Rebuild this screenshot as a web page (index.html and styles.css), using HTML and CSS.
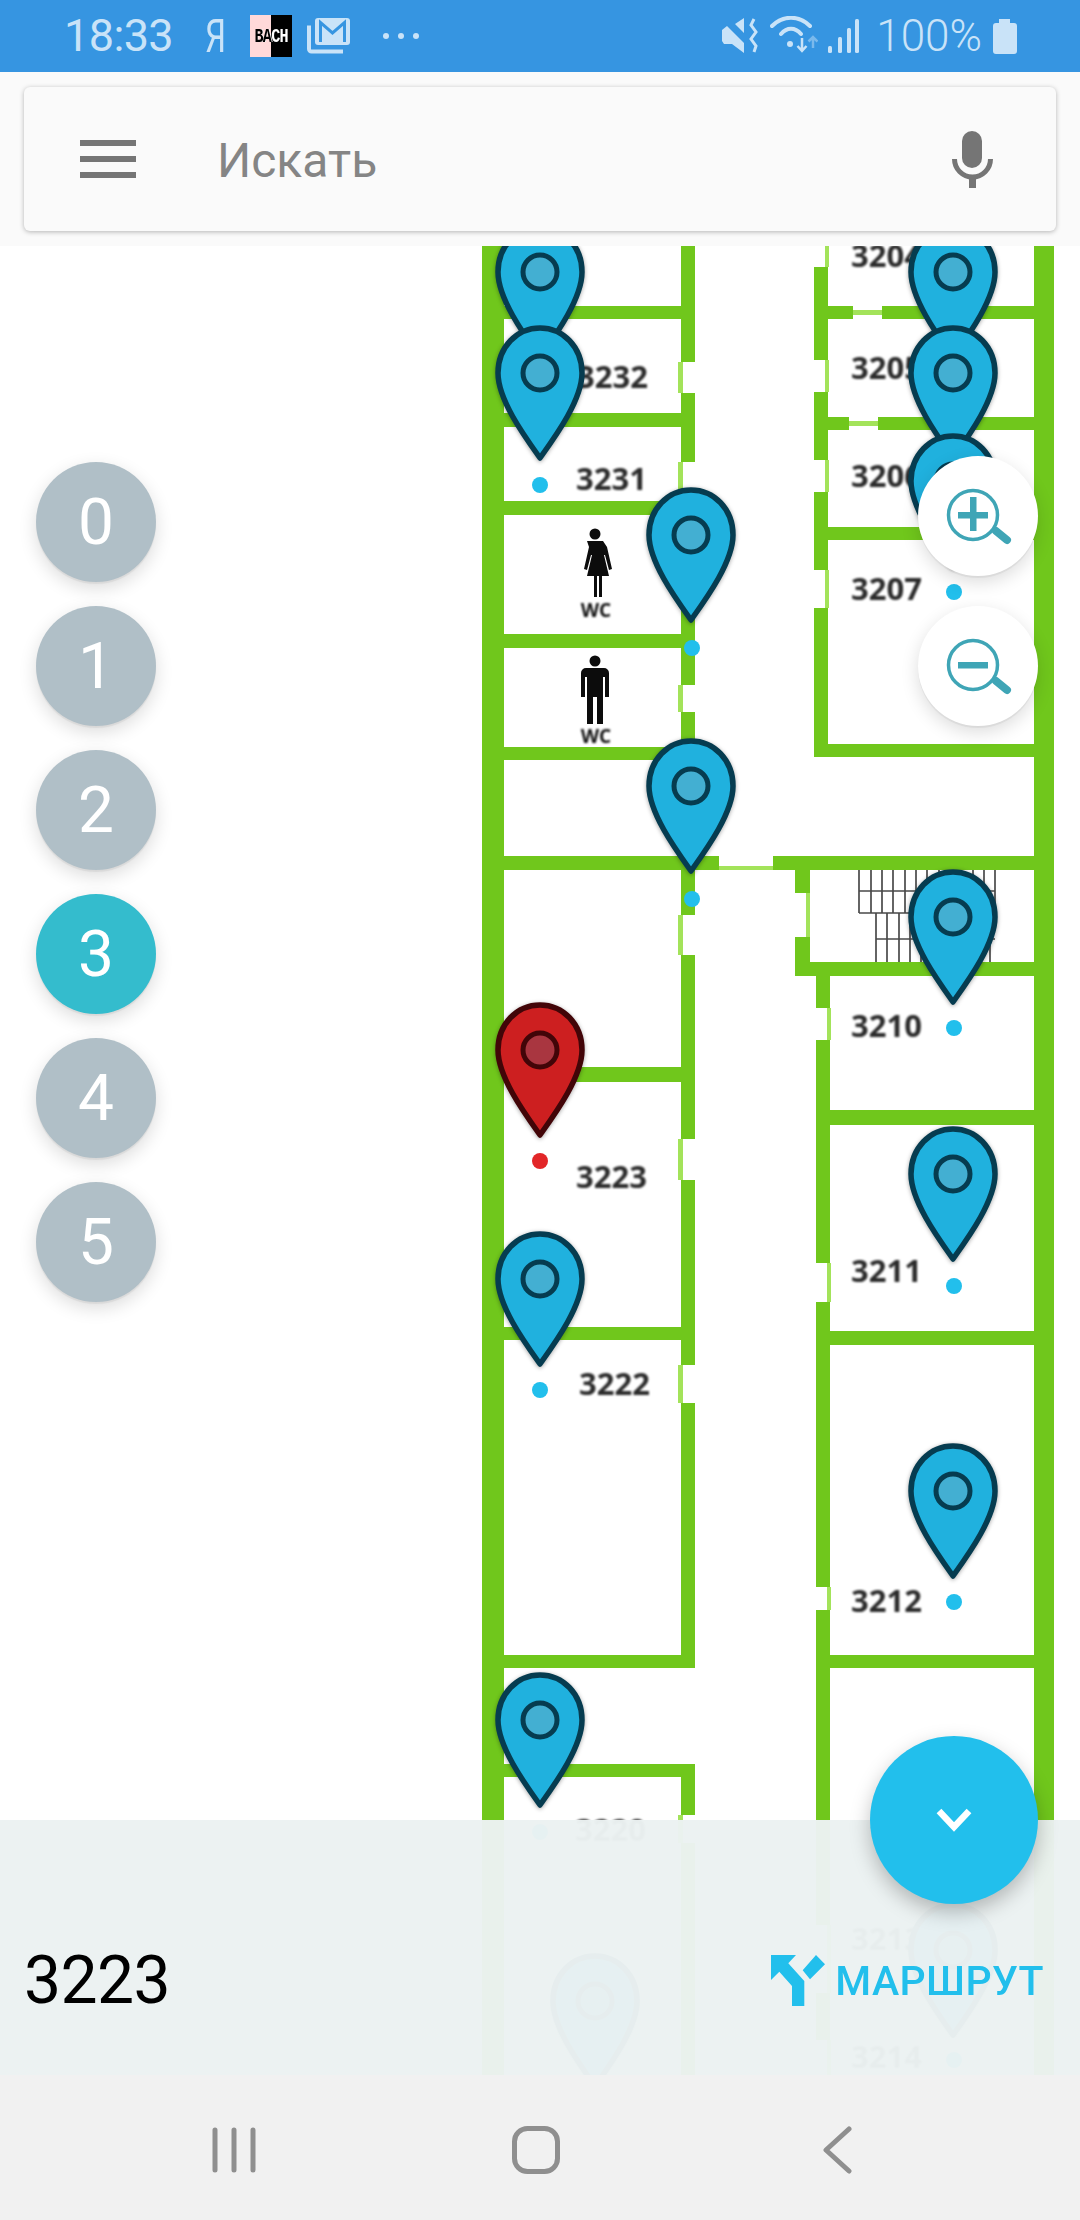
FILE: index.html
```html
<!DOCTYPE html>
<html lang="ru">
<head>
<meta charset="utf-8">
<title>Карта</title>
<link rel="stylesheet" href="styles.css">
</head>
<body>
<div class="phone">
  <header class="status">
    <div class="status-group">
      <span class="time">18:33</span>
      <span class="ya">Я</span>
      <span class="bach"><span class="bach-text"><span class="bk">BA</span><span class="wt">CH</span></span></span>
      <svg class="ic-mail" width="44" height="36" viewBox="0 0 44 36">
        <rect class="st-fill" x="8" y="0" width="35" height="27" rx="3"/>
        <path class="st-cut" d="M13.5 24V4.5L25.5 15 37.500 4.500V24"/>
        <path class="st-line" d="M2 7.500V31a2.500 2.500 0 0 0 2.500 2.500H36"/>
      </svg>
      <svg class="ic-dots" width="37" height="8" viewBox="0 0 37 8">
        <circle class="st-fill" cx="3" cy="4" r="3"/><circle class="st-fill" cx="18" cy="4" r="3"/><circle class="st-fill" cx="33" cy="4" r="3"/>
      </svg>
    </div>
    <div class="status-group">
      <svg class="ic-mute" width="36" height="36" viewBox="0 0 36 36">
        <path class="st-fill" d="M0 12l5-4 17 17v10L10 26H2l-2-3zM13 6l9-6v15z"/>
        <path class="st-wave" d="M32 1l-3 6 5 7-5 7 5 7-2 6"/>
      </svg>
      <svg class="ic-wifi" width="48" height="42" viewBox="0 0 48 42">
        <path class="st-arc" d="M2 10C13-1 29-1 40 10M11 18c6-7 14-7 20 0"/>
        <circle class="st-fill" cx="20" cy="28" r="3"/>
        <path class="st-arrow" d="M32 22v13M27.500 30l4.500 5 4.500-5"/>
        <path class="st-arrow dim" d="M43 32V21M38.500 25.500l4.500-4.500 4.500 4.500"/>
      </svg>
      <svg class="ic-signal" width="31" height="34" viewBox="0 0 31 34">
        <rect class="st-fill" x="0" y="27" width="4" height="7" rx="1.500"/>
        <rect class="st-fill" x="10" y="18" width="4" height="16" rx="1.500"/>
        <rect class="st-fill" x="19" y="9" width="4" height="25" rx="1.500"/>
        <rect class="st-fill" x="27" y="0" width="4" height="34" rx="1.500"/>
      </svg>
      <span class="pct">100%</span>
      <svg class="ic-batt" width="24" height="35" viewBox="0 0 24 35">
        <path class="st-fill" d="M6 0h11v4h4a3 3 0 0 1 3 3v25a3 3 0 0 1-3 3H3a3 3 0 0 1-3-3V7a3 3 0 0 1 3-3h3z"/>
      </svg>
    </div>
  </header>

  <div class="top">
    <div class="search">
      <div class="burger"><i></i><i></i><i></i></div>
      <span class="search-text">Искать</span>
      <svg class="mic" width="41" height="57" viewBox="0 0 41 57">
        <rect class="mic-f" x="10" y="0" width="20" height="37" rx="10"/>
        <path class="mic-s" d="M2.500 28a18 18 0 0 0 36 0"/>
        <rect class="mic-f" x="17" y="45" width="7" height="12"/>
      </svg>
    </div>
  </div>

  <main class="mapwrap">
    <svg class="map" width="1080" height="1829" viewBox="0 246 1080 1829">
      <defs>
        <g id="pin-blue">
          <path class="pin-b" d="M45 3C22 3 3 22 3 48c0 27 27 64 42 85 15-21 42-58 42-85C87 22 68 3 45 3z"/>
          <circle class="pin-bc" cx="45" cy="48" r="17"/>
        </g>
        <g id="pin-red">
          <path class="pin-r" d="M45 3C22 3 3 22 3 48c0 27 27 64 42 85 15-21 42-58 42-85C87 22 68 3 45 3z"/>
          <circle class="pin-rc" cx="45" cy="48" r="17"/>
        </g>
      </defs>

      <g class="stairs">
        <path d="M859 870v43M871 870v43M882 870v43M893 870v43M905 870v43M916 870v43M927 870v43M939 870v43M950 870v43M961 870v43M973 870v43M984 870v43M995 870v43M876 913v49M887 913v49M899 913v49M910 913v49M921 913v49M933 913v49M944 913v49M955 913v49M967 913v49M978 913v49M990 913v49"/>
        <path d="M859 891h136M859 913h136M876 939h119"/>
      </g>

      <g class="walls">
        <path class="door" d="M678 362h5v31h-5zM678 462h5v39h-5zM678 685h5v27h-5zM678 915h5v40h-5zM678 1139h5v41h-5zM678 1365h5v38h-5zM678 1815h5v28h-5zM719 866h54v4h-54zM853 310h29v5h-29zM849 421h29v5h-29zM825 246h4v21h-4zM825 360h4v32h-4zM825 460h4v32h-4zM825 570h4v38h-4zM806 893h4v44h-4zM827 1008h4v32h-4zM827 1263h4v39h-4zM827 1587h4v23h-4zM827 1925h4v68h-4zM827 2040h4v35h-4z"/>
        <path class="wall" d="M482 246h22v1829h-22zM1034 246h20v1829h-20z
          M681 246h14v116h-14zM681 393h14v69h-14zM681 501h14v184h-14zM681 712h14v203h-14zM681 955h14v184h-14zM681 1180h14v185h-14zM681 1403h14v265h-14zM681 1764h14v51h-14zM681 1843h14v232h-14z
          M504 306h177v13H504zM504 413h177v14H504zM504 501h177v14H504zM504 634h177v14H504zM504 747h177v13H504zM504 856h215v14H504zM773 856h261v14H773zM504 1067h177v15H504zM504 1327h191v13H504zM504 1655h191v13H504zM504 1764h191v13H504z
          M814 267h14v93h-14zM814 392h14v68h-14zM814 492h14v78h-14zM814 608h14v149h-14zM828 744h206v13H828z
          M828 306h25v13h-25zM882 306h152v13H882zM828 417h21v13h-21zM878 417h156v13H878zM828 527h206v13H828z
          M795 870h15v23h-15zM795 937h15v39h-15zM795 962h239v14H795z
          M816 976h14v32h-14zM816 1040h14v223h-14zM816 1302h14v285h-14zM816 1610h14v315h-14zM816 1993h14v47h-14z
          M830 1110h204v15H830zM830 1331h204v14H830zM816 1655h218v13H816z"/>
      </g>

      <g class="figures">
        <circle cx="595" cy="534" r="5.500"/>
        <path d="M587 541h16l4 6 5 22-3 1-4-15h-1l5 21h-7v21h-3v-21h-2v21h-3v-21h-7l5-21h-1l-4 15-3-1 5-22z"/>
        <circle cx="595" cy="661" r="5.500"/>
        <path d="M586 668h18a5 5 0 0 1 5 5v24h-4v-20h-2v47h-6v-27h-4v27h-6v-47h-2v20h-4v-24a5 5 0 0 1 5-5z"/>
      </g>
      <g class="labels">
        <text class="wc" x="596" y="617" text-anchor="middle">WC</text>
        <text class="wc" x="596" y="743" text-anchor="middle">WC</text>
        <text x="648" y="388" text-anchor="end">3232</text>
        <text x="576" y="490">3231</text>
        <text x="851" y="267">3204</text>
        <text x="851" y="379">3205</text>
        <text x="851" y="487">3206</text>
        <text x="851" y="600">3207</text>
        <text x="851" y="1037">3210</text>
        <text x="851" y="1282">3211</text>
        <text x="851" y="1612">3212</text>
        <text x="576" y="1188">3223</text>
        <text x="579" y="1395">3222</text>
        <text x="575" y="1841">3220</text>
        <text x="851" y="1950">3213</text>
        <text x="851" y="2068">3214</text>
      </g>

      <g class="dots">
        <circle cx="540" cy="485" r="8"/>
        <circle cx="954" cy="592" r="8"/>
        <circle cx="692" cy="648" r="8"/>
        <circle cx="692" cy="899" r="8"/>
        <circle cx="954" cy="1028" r="8"/>
        <circle class="dot-red" cx="540" cy="1161" r="8"/>
        <circle cx="954" cy="1286" r="8"/>
        <circle cx="540" cy="1390" r="8"/>
        <circle cx="954" cy="1602" r="8"/>
        <circle cx="540" cy="1832" r="8"/>
        <circle cx="954" cy="2060" r="8"/>
      </g>

      <g class="pins">
        <use href="#pin-blue" x="495" y="224"/>
        <use href="#pin-blue" x="908" y="224"/>
        <use href="#pin-blue" x="495" y="325"/>
        <use href="#pin-blue" x="908" y="325"/>
        <use href="#pin-blue" x="908" y="433"/>
        <use href="#pin-blue" x="646" y="487"/>
        <use href="#pin-blue" x="646" y="738"/>
        <use href="#pin-blue" x="908" y="869"/>
        <use href="#pin-red" x="495" y="1002"/>
        <use href="#pin-blue" x="908" y="1126"/>
        <use href="#pin-blue" x="495" y="1231"/>
        <use href="#pin-blue" x="908" y="1443"/>
        <use href="#pin-blue" x="495" y="1672"/>
        <use href="#pin-blue" x="908" y="1902"/>
        <use href="#pin-blue" x="550" y="1953"/>
      </g>
    </svg>

    <div class="floors">
      <div class="floor">0</div>
      <div class="floor">1</div>
      <div class="floor">2</div>
      <div class="floor active">3</div>
      <div class="floor">4</div>
      <div class="floor">5</div>
    </div>

    <div class="zooms">
      <div class="zoom">
        <svg width="120" height="120" viewBox="0 0 120 120">
          <circle class="zi-s" cx="55" cy="59" r="24.500"/>
          <path class="zi-h" d="M78 75l11 9"/>
          <path class="zi-f" d="M40 56h12V41h6.500v15H70v6.500H58.500V75H52V62.500H40z"/>
        </svg>
      </div>
      <div class="zoom">
        <svg width="120" height="120" viewBox="0 0 120 120">
          <circle class="zi-s" cx="55" cy="59" r="24.500"/>
          <path class="zi-h" d="M78 75l11 9"/>
          <path class="zi-f" d="M40 56h30v6.500H40z"/>
        </svg>
      </div>
    </div>

    <section class="panel">
      <span class="room">3223</span>
      <div class="route">
        <svg class="route-ic" width="54" height="51" viewBox="0 0 54 51">
          <path d="M0 0h25l-7.700 8.300L33.300 26v25H21V31L8.300 16.700 0 25zM45 0l9 9.300-15 15-7.300-9z"/>
        </svg>
        <span class="route-text">МАРШРУТ</span>
      </div>
    </section>

    <div class="fab">
      <svg width="36" height="24" viewBox="0 0 36 24"><path d="M3 3l15 16L33 3"/></svg>
    </div>
  </main>

  <nav class="navbar">
    <svg class="nav-ic" width="48" height="48" viewBox="0 0 48 48">
      <path d="M5 4v40M24 4v40M43 4v40"/>
    </svg>
    <svg class="nav-ic" width="48" height="48" viewBox="0 0 48 48">
      <rect x="2.500" y="2.500" width="43" height="43" rx="13"/>
    </svg>
    <svg class="nav-ic" width="48" height="48" viewBox="0 0 48 48">
      <path d="M35 3L12 24l23 21"/>
    </svg>
  </nav>
</div>
</body>
</html>
```
FILE: styles.css
```css
* { box-sizing: border-box; }
html, body { margin: 0; padding: 0; background: #fff; }
body { font-family: Roboto, "Noto Sans", sans-serif; }

.phone { width: 1080px; height: 2220px; display: flex; flex-direction: column; overflow: hidden; }

/* status bar */
.status { height: 72px; flex: none; background: #3695e1; color: #c9e3f8; display: flex; justify-content: space-between; align-items: center; padding: 0 63px 0 64px; }
.status-group { display: flex; align-items: center; }
.time { width: 108px; font-size: 45px; font-weight: 400; line-height: 72px; letter-spacing: -.6px; white-space: nowrap; }
.ya { width: 21px; font-size: 46px; font-weight: 400; line-height: 72px; margin-left: 33px; transform: scaleX(.72); transform-origin: left center; }
.bach { width: 42px; height: 42px; margin-left: 24px; background: linear-gradient(90deg, #ffd9d9 50%, #000 50%); display: flex; align-items: center; justify-content: center; overflow: hidden; }
.bach-text { font: 700 21px/21px "Liberation Mono", monospace; transform: scaleX(.72); letter-spacing: -1px; white-space: nowrap; }
.bk { color: #000; text-shadow: 1px 0 #fff; }
.wt { color: #fff; }
.ic-mail { margin-left: 15px; }
.ic-dots { margin-left: 32px; }
.pct { font-size: 44px; font-weight: 300; line-height: 72px; margin-left: 17px; }
.ic-batt { margin-left: 11px; }
.ic-wifi { margin-left: 12px; margin-top: 2px; }
.ic-signal { margin-left: 10px; }
.st-fill { fill: #c9e3f8; }
.st-cut { fill: none; stroke: #3695e1; stroke-width: 3; }
.st-line { fill: none; stroke: #c9e3f8; stroke-width: 4; }
.st-wave { fill: none; stroke: #c9e3f8; stroke-width: 3; }
.st-arc { fill: none; stroke: #c9e3f8; stroke-width: 4; stroke-linecap: round; }
.st-arrow { fill: none; stroke: #c9e3f8; stroke-width: 2.500; }
.st-arrow.dim { stroke: #7ab9ec; }

/* search */
.top { height: 174px; flex: none; background: #fafafa; padding: 15px 24px; position: relative; z-index: 2; }
.search { height: 144px; background: #fafafa; border-radius: 6px; box-shadow: 0 1px 5px rgba(0,0,0,.28); display: flex; align-items: center; padding: 0 63px 0 56px; }
.burger { width: 56px; height: 38px; display: flex; flex-direction: column; justify-content: space-between; flex: none; }
.burger i { display: block; height: 6px; background: #757575; }
.search-text { font-size: 48px; font-weight: 400; color: #858585; margin-left: 81px; margin-top: 3px; flex: 1; line-height: 56px; }
.mic-f { fill: #757575; }
.mic-s { fill: none; stroke: #757575; stroke-width: 5; }

/* map */
.mapwrap { height: 1829px; flex: none; position: relative; overflow: hidden; background: #fff; }
.map { position: absolute; left: 0; top: 0; display: block; }
.walls { filter: blur(.6px); }
.wall { fill: #70c71c; }
.door { fill: #a3e35a; }
.stairs { filter: blur(.7px); }
.stairs path { fill: none; stroke: #4a4a4a; stroke-width: 1.700; }
.figures { fill: #0c0c0c; filter: blur(.7px); }
.labels { font: 700 31px "Open Sans", "Liberation Sans", sans-serif; fill: #2b2b2b; filter: blur(1px); }
.labels .wc { font-size: 19px; fill: #111; }
.dots circle { fill: #22bfec; }
.dots .dot-red { fill: #e22628; }
.pins { filter: drop-shadow(0 1px 2px rgba(0,0,0,.35)); }
.pin-b { fill: #20b1de; stroke: #063c50; stroke-width: 5.500; stroke-linejoin: round; }
.pin-bc { fill: #43afd2; stroke: #063c50; stroke-width: 5; }
.pin-r { fill: #cd1f20; stroke: #420508; stroke-width: 5.500; stroke-linejoin: round; }
.pin-rc { fill: #a93640; stroke: #420508; stroke-width: 5; }

/* floor picker */
.floors { position: absolute; left: 36px; top: 216px; display: flex; flex-direction: column; gap: 24px; }
.floor { width: 120px; height: 120px; border-radius: 50%; background: #b0bfc7; color: #fff; font-size: 64px; font-weight: 400; display: flex; align-items: center; justify-content: center; box-shadow: 0 2px 1px rgba(0,0,0,.06), 0 6px 18px rgba(0,0,0,.14); }
.floor.active { background: #34bccd; }

/* zoom controls */
.zooms { position: absolute; left: 918px; top: 210px; display: flex; flex-direction: column; gap: 30px; }
.zoom { width: 120px; height: 120px; border-radius: 50%; background: #fff; box-shadow: 0 2px 1px rgba(0,0,0,.06), 0 6px 18px rgba(0,0,0,.14); }
.zoom svg { display: block; }
.zi-s { fill: none; stroke: #3fa5b6; stroke-width: 3.500; }
.zi-h { fill: none; stroke: #3fa5b6; stroke-width: 8; stroke-linecap: round; }
.zi-f { fill: #3fa5b6; }

/* bottom panel */
.panel { position: absolute; left: 0; right: 0; bottom: 0; height: 255px; background: rgba(236,242,242,.975); display: flex; align-items: center; justify-content: space-between; padding: 66px 36px 0 24px; }
.room { font-size: 66px; font-weight: 400; color: #000; line-height: 76px; letter-spacing: -.6px; }
.route { display: flex; align-items: center; gap: 10px; }
.route-ic { fill: #22bfec; display: block; }
.route-text { font-size: 41px; font-weight: 500; color: #22bfec; line-height: 50px; letter-spacing: .4px; }

.fab { position: absolute; left: 870px; top: 1490px; width: 168px; height: 168px; border-radius: 50%; background: #22bfec; box-shadow: 0 8px 20px rgba(0,0,0,.25); display: flex; align-items: center; justify-content: center; }
.fab svg { display: block; }
.fab path { fill: none; stroke: #fff; stroke-width: 6.500; }

/* nav */
.navbar { height: 145px; flex: none; background: #f1f1f1; display: flex; align-items: center; justify-content: center; gap: 254px; padding: 5px 8px 0 0; }
.nav-ic { fill: none; stroke: #8f8f8f; stroke-width: 5; stroke-linecap: round; stroke-linejoin: round; display: block; }
```
